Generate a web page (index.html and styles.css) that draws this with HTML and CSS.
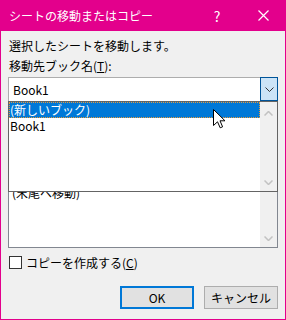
FILE: index.html
```html
<!DOCTYPE html>
<html lang="ja">
<head>
    <meta charset="UTF-8">
    <meta name="viewport" content="width=device-width, initial-scale=1.0">
    <title>シートの移動またはコピー</title>
    <link rel="stylesheet" href="styles.css">
</head>
<body>
    <div class="dialog">
        <div class="titlebar">
            <span class="title">シートの移動またはコピー</span>
            <span class="title-btn">?</span>
            <span class="title-btn">
                <svg width="11" height="11" viewBox="0 0 11 11"><path d="M0.5 0.5 L10.5 10.5 M10.5 0.5 L0.5 10.5" stroke="#fff" stroke-width="1.2"/></svg>
            </span>
        </div>

        <div class="content">
            <div class="line">選択したシートを移動します。</div>
            <div class="line">移動先ブック名(<u>T</u>):</div>

            <div class="combo-wrap">
                <div class="combo">
                    <span class="combo-value">Book1</span>
                    <span class="combo-btn">
                        <svg width="9" height="5" viewBox="0 0 9 5"><path d="M0.5 0.5 L4.5 4.5 L8.5 0.5" fill="none" stroke="#333" stroke-width="1"/></svg>
                    </span>
                </div>

                <!-- opened dropdown list, lies over the listbox below -->
                <div class="dropdown">
                    <div class="dd-items">
                        <div class="dd-item selected">(新しいブック)</div>
                        <div class="dd-item">Book1</div>
                    </div>
                    <div class="scrollbar">
                        <svg width="9" height="5" viewBox="0 0 9 5"><path d="M0.5 4.5 L4.5 0.5 L8.5 4.5" fill="none" stroke="#c2c2c2" stroke-width="1.5"/></svg>
                        <svg width="9" height="5" viewBox="0 0 9 5"><path d="M0.5 0.5 L4.5 4.5 L8.5 0.5" fill="none" stroke="#c2c2c2" stroke-width="1.5"/></svg>
                    </div>
                </div>
            </div>

            <div class="line section-label">挿入先(<u>B</u>):</div>
            <div class="listbox">
                <div class="lb-items">
                    <div class="lb-item">(末尾へ移動)</div>
                </div>
                <div class="scrollbar lb-scroll">
                    <svg width="9" height="5" viewBox="0 0 9 5"><path d="M0.5 0.5 L4.5 4.5 L8.5 0.5" fill="none" stroke="#c2c2c2" stroke-width="1.5"/></svg>
                </div>
            </div>

            <div class="check-row">
                <span class="checkbox"></span>
                <span>コピーを作成する(<u>C</u>)</span>
            </div>

            <div class="buttons">
                <button class="btn btn-default">OK</button>
                <button class="btn">キャンセル</button>
            </div>
        </div>

        <svg class="cursor" width="13" height="20" viewBox="0 0 13 20">
            <path d="M0.5 0.5 L0.5 16.5 L4.5 12.8 L7.2 18.8 L9.6 17.8 L7 11.8 L12 11.8 Z" fill="#fff" stroke="#000" stroke-width="1"/>
        </svg>
    </div>
</body>
</html>
```

FILE: styles.css
```css
* {
    box-sizing: border-box;
}
body {
    margin: 0;
    font-family: "Noto Sans CJK JP", sans-serif;
    font-size: 12px;
    color: #000;
}
.dialog {
    position: relative;
    width: 286px;
    height: 320px;
    background-color: #f0f0f0;
    border: 1px solid #e3008c;
    border-top: none;
}
.titlebar {
    display: flex;
    align-items: center;
    height: 31px;
    margin: 0 -1px;
    padding-left: 9px;
    background-color: #e3008c;
    color: #fff;
}
.title {
    flex: 1;
    padding-bottom: 1px;
}
.title-btn {
    display: flex;
    align-items: center;
    justify-content: center;
    width: 46px;
    height: 31px;
    font-size: 14px;
}
.content {
    padding: 5px 7px 0 7px;
}
.line {
    height: 20px;
    line-height: 20px;
    padding-left: 1px;
}
u {
    text-decoration-thickness: 1px;
}
.combo-wrap {
    position: relative;
    margin-top: 1px;
}
.combo {
    display: flex;
    height: 24px;
    background-color: #fff;
    border: 1px solid #adadad;
    border-bottom: none;
}
.combo-value {
    flex: 1;
    line-height: 23px;
    padding-left: 4px;
}
.combo-btn {
    display: flex;
    align-items: center;
    justify-content: center;
    width: 18px;
    height: 24px;
    margin: -1px -1px 0 0;
    background-color: #cce4f7;
    border: 1px solid #005499;
}
.dropdown {
    position: absolute;
    top: 24px;
    left: 0;
    right: 0;
    height: 91px;
    display: flex;
    background-color: #fff;
    border: 1px solid #646464;
    z-index: 2;
}
.dd-items {
    flex: 1;
}
.dd-item {
    height: 16px;
    line-height: 15px;
    padding-left: 1px;
}
.dd-item.selected {
    background-color: #0078d7;
    color: #fff;
    border: 1px dotted #e39a3d;
    line-height: 13px;
    padding-left: 0;
}
.scrollbar {
    display: flex;
    flex-direction: column;
    justify-content: space-between;
    align-items: center;
    width: 17px;
    padding: 9px 0 6px 0;
    background-color: #f0f0f0;
}
.section-label {
    margin-top: 63px;
}
.listbox {
    display: flex;
    height: 65px;
    margin-top: -1px;
    background-color: #fff;
    border: 1px solid #828790;
}
.lb-items {
    flex: 1;
    padding-top: 1px;
}
.lb-item {
    height: 16px;
    line-height: 16px;
    padding-left: 3px;
}
.lb-scroll {
    justify-content: flex-end;
    padding-bottom: 6px;
}
.check-row {
    display: flex;
    align-items: center;
    gap: 4px;
    height: 16px;
    margin-top: 6px;
    padding-left: 1px;
}
.checkbox {
    width: 13px;
    height: 13px;
    background-color: #fff;
    border: 1px solid #333;
}
.buttons {
    display: flex;
    justify-content: flex-end;
    gap: 10px;
    margin-top: 16px;
}
.btn {
    width: 74px;
    height: 23px;
    padding: 0;
    font-family: inherit;
    font-size: 12px;
    color: #000;
    background-color: #e1e1e1;
    border: 1px solid #adadad;
}
.btn-default {
    border: 2px solid #0078d7;
}
.cursor {
    position: absolute;
    left: 212px;
    top: 109px;
    z-index: 3;
}
```
